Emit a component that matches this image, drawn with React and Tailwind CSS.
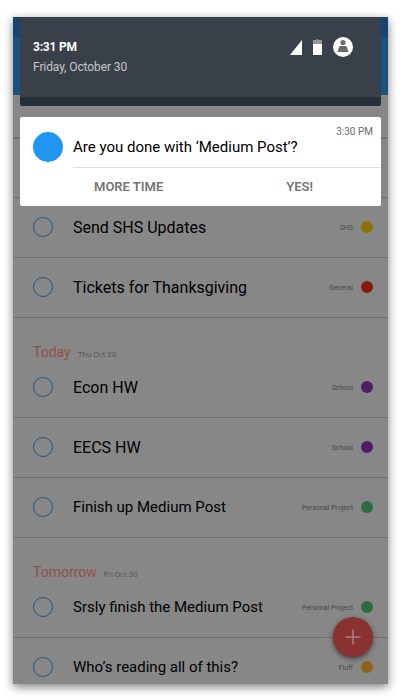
import React from 'react';

const sections = [
    {
        tasks: [
            { title: '' },
            { title: 'Send SHS Updates', tag: 'SHS', dot: 'bg-[#8e7009]' },
            { title: 'Tickets for Thanksgiving', tag: 'General', dot: 'bg-[#861b0d]' },
        ],
    },
    {
        name: 'Today',
        date: 'Thu Oct 29',
        tasks: [
            { title: 'Econ HW', tag: 'School', dot: 'bg-[#4f1d66]' },
            { title: 'EECS HW', tag: 'School', dot: 'bg-[#4f1d66]' },
            { title: 'Finish up Medium Post', tag: 'Personal Project', dot: 'bg-[#2d6c43]', small: true },
        ],
    },
    {
        name: 'Tomorrow',
        date: 'Fri Oct 30',
        tasks: [
            { title: 'Srsly finish the Medium Post', tag: 'Personal Project', dot: 'bg-[#2d6c43]', small: true },
            { title: 'Who’s reading all of this?', tag: 'Fluff', dot: 'bg-[#8f631b]', small: true },
        ],
    },
];

const Task = ({ task }) => (
    <div className="flex h-[60px] shrink-0 items-center border-b border-[#707070] pb-px pl-5 pr-[15px]">
        {task.title && (
            <>
                <span className="size-5 rounded-full border border-[#225780]" />
                <span className={`ml-5 whitespace-nowrap text-black ${task.small ? 'text-[15px]' : 'pt-0.5 text-base'}`}>{task.title}</span>
                <span className="ml-auto whitespace-nowrap pt-0.5 text-[7px] text-[#484848]">{task.tag}</span>
                <span className={`ml-2 size-3 rounded-full ${task.dot}`} />
            </>
        )}
    </div>
);

const StatusIcons = () => (
    <svg width="63" height="20" viewBox="0 0 63 20">
        <path d="M0 18 12 3v15z" fill="#fff" />
        <path d="M26 2h3v1h-3z" fill="#70757b" />
        <path d="M23 3h9v4h-9z" fill="#929599" />
        <path d="M23 7h9v11h-9z" fill="#fff" />
        <circle cx="53" cy="10" r="10" fill="#fff" />
        <circle cx="53" cy="5.5" r="2.6" fill="#6b6b6b" />
        <path d="M50 9h6q1.500 1 2.300 6H47.700Q48.500 10 50 9z" fill="#6b6b6b" />
    </svg>
);

const Shade = () => (
    <div className="absolute left-[7px] top-0 w-[361px]">
        <div className="flex h-[89px] justify-between rounded-b-xs border-b-9 border-[#273038] bg-[#3a4049] pl-[13px] pr-7 pt-5">
            <div>
                <div className="text-xs font-bold leading-5 tracking-[-0.2px] text-white">3:31 PM</div>
                <div className="text-xs leading-5 tracking-[-0.1px] text-[#c4c6c8]">Friday, October 30</div>
            </div>
            <StatusIcons />
        </div>
        <div className="mt-[11px] flex h-[89px] rounded-xs bg-white pl-[13px]">
            <div className="mt-[15px] size-[30px] shrink-0 rounded-full bg-[#2196f3]" />
            <div className="ml-2.5 flex-1">
                <div className="relative h-[51px] border-b border-[#dedede]">
                    <div className="whitespace-nowrap pt-5 text-[15px] leading-5 text-black">Are you done with ‘Medium Post’?</div>
                    <span className="absolute right-2 top-2 mt-px text-[10px] leading-3 text-[#6b6b6b]">3:30 PM</span>
                </div>
                <div className="flex h-[38px] items-center text-[13px] font-semibold text-[#757575]">
                    <span className="ml-[21px]">MORE TIME</span>
                    <span className="ml-auto mr-[68px]">YES!</span>
                </div>
            </div>
        </div>
    </div>
);

export default function App() {
    return (
        <div className="h-[700px] w-[400px] overflow-hidden bg-white pl-[13px] pt-[17px] font-['Roboto',sans-serif]">
            <div className="relative h-[667px] w-[375px] bg-[#878787] shadow-[0_3px_9px_rgba(0,0,0,0.5)]">
                <div className="flex h-full flex-col overflow-hidden">
                    <div className="h-5 shrink-0 bg-[#164374]" />
                    <div className="h-[58px] shrink-0 bg-[#1b5380]" />
                    <div className="h-[42px] shrink-0 bg-[#878787] shadow-[0_1px_2px_rgba(0,0,0,0.3)]" />
                    <div className="h-px shrink-0" />
                    {sections.map((section, i) => (
                        <React.Fragment key={i}>
                            {section.name && (
                                <div className="flex h-10 shrink-0 items-baseline pl-5 pt-6">
                                    <span className="text-sm leading-5 text-[#90504f]">{section.name}</span>
                                    <span className="ml-[7px] text-[8px] font-light text-[#404040]">{section.date}</span>
                                </div>
                            )}
                            {section.tasks.map((task, j) => <Task key={j} task={task} />)}
                        </React.Fragment>
                    ))}
                </div>
                <Shade />
                <button className="absolute bottom-[27px] right-[15px] flex size-10 items-center justify-center rounded-full bg-[#8a3131] shadow-[0_2px_5px_rgba(0,0,0,0.5)]">
                    <svg width="16" height="16" viewBox="0 0 16 16">
                        <path d="M8 .5v15M.5 8h15" stroke="#ad7f7f" strokeWidth="1.5" />
                    </svg>
                </button>
            </div>
        </div>
    );
}
